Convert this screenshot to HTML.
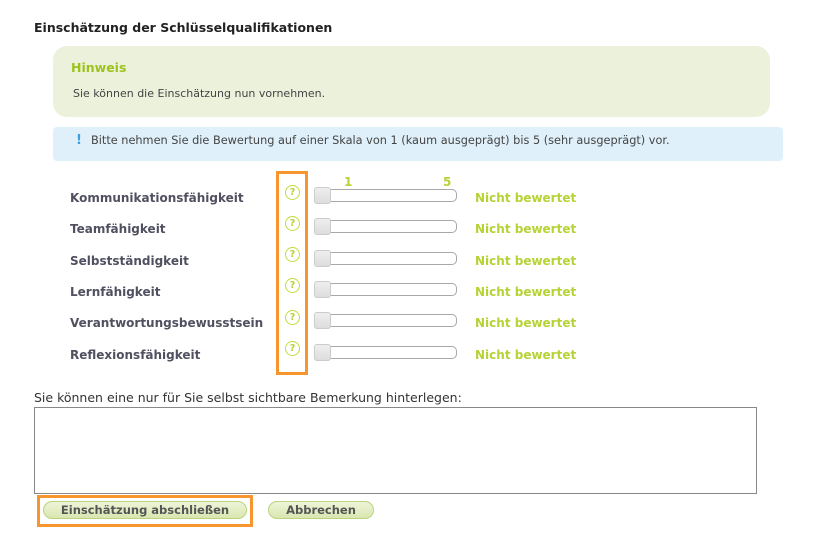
<!DOCTYPE html>
<html><head><meta charset="utf-8"><style>
body{margin:0;width:814px;height:534px;background:#fff;font-family:"DejaVu Sans","Liberation Sans",sans-serif;position:relative;overflow:hidden}
.a{position:absolute;white-space:nowrap}
h1{position:absolute;left:34px;top:20px;margin:0;font-size:12.5px;font-weight:bold;color:#222}
.hin{left:53px;top:46px;width:717px;height:71px;background:#ecf1dc;border-radius:14px}
.blue{left:53px;top:127px;width:730px;height:34px;background:#dff0fa;border-radius:4px}
.lbl{left:70px;font-size:12px;font-weight:bold;color:#505060}
.q{left:285px;width:13px;height:13px;border:1.5px solid #c2dc3a;border-radius:50%;color:#b8d130;font-size:9.5px;font-weight:bold;text-align:center;line-height:13px}
.tr{left:314px;width:141px;height:11px;border:1px solid #a8a8a8;border-radius:5px;background:#fff}
.th{left:314px;width:15px;height:15px;background:linear-gradient(#eee,#ddd);border:1px solid #ccc;border-radius:3px}
.nb{left:475px;font-size:12px;font-weight:bold;color:#b5d334}
.btn{top:501px;height:16px;border:1px solid #bcd27e;border-radius:9px;background:linear-gradient(#eef4d8,#d9e7b0);font-size:11.5px;font-weight:bold;color:#555;text-align:center;line-height:16px}
</style></head><body>
<h1>Einschätzung der Schlüsselqualifikationen</h1>
<div class="a hin"></div>
<div class="a" style="left:71px;top:60px;font-size:12.5px;font-weight:bold;color:#9cc31c">Hinweis</div>
<div class="a" style="left:73px;top:87px;font-size:11px;color:#444">Sie können die Einschätzung nun vornehmen.</div>
<div class="a blue"></div>
<div class="a" style="left:76px;top:133px;font-size:13px;font-weight:bold;color:#3aa0e0">!</div>
<div class="a" style="left:91px;top:134px;font-size:11.3px;color:#444">Bitte nehmen Sie die Bewertung auf einer Skala von 1 (kaum ausgeprägt) bis 5 (sehr ausgeprägt) vor.</div>
<div class="a" style="left:276px;top:171px;width:26px;height:198px;border:3px solid #f7962e"></div>
<div class="a" style="left:344px;top:175px;font-size:12px;font-weight:bold;color:#b5d334">1</div>
<div class="a" style="left:443px;top:175px;font-size:12px;font-weight:bold;color:#b5d334">5</div>

<div class="a lbl" style="top:191px">Kommunikationsfähigkeit</div><div class="a q" style="top:185px">?</div><div class="a tr" style="top:189px"></div><div class="a th" style="top:187px"></div><div class="a nb" style="top:191px">Nicht bewertet</div>
<div class="a lbl" style="top:222px">Teamfähigkeit</div><div class="a q" style="top:216px">?</div><div class="a tr" style="top:220px"></div><div class="a th" style="top:218px"></div><div class="a nb" style="top:222px">Nicht bewertet</div>
<div class="a lbl" style="top:254px">Selbstständigkeit</div><div class="a q" style="top:247px">?</div><div class="a tr" style="top:252px"></div><div class="a th" style="top:250px"></div><div class="a nb" style="top:254px">Nicht bewertet</div>
<div class="a lbl" style="top:285px">Lernfähigkeit</div><div class="a q" style="top:278px">?</div><div class="a tr" style="top:283px"></div><div class="a th" style="top:281px"></div><div class="a nb" style="top:285px">Nicht bewertet</div>
<div class="a lbl" style="top:316px">Verantwortungsbewusstsein</div><div class="a q" style="top:310px">?</div><div class="a tr" style="top:314px"></div><div class="a th" style="top:312px"></div><div class="a nb" style="top:316px">Nicht bewertet</div>
<div class="a lbl" style="top:348px">Reflexionsfähigkeit</div><div class="a q" style="top:341px">?</div><div class="a tr" style="top:346px"></div><div class="a th" style="top:344px"></div><div class="a nb" style="top:348px">Nicht bewertet</div>

<div class="a" style="left:34px;top:390px;font-size:12.5px;color:#333">Sie können eine nur für Sie selbst sichtbare Bemerkung hinterlegen:</div>
<div class="a" style="left:34px;top:407px;width:721px;height:85px;border:1px solid #888"></div>
<div class="a" style="left:37px;top:495px;width:210px;height:26px;border:3px solid #f7962e"></div>
<div class="a btn" style="left:43px;width:202px">Einschätzung abschließen</div>
<div class="a btn" style="left:268px;width:104px">Abbrechen</div>
</body></html>
